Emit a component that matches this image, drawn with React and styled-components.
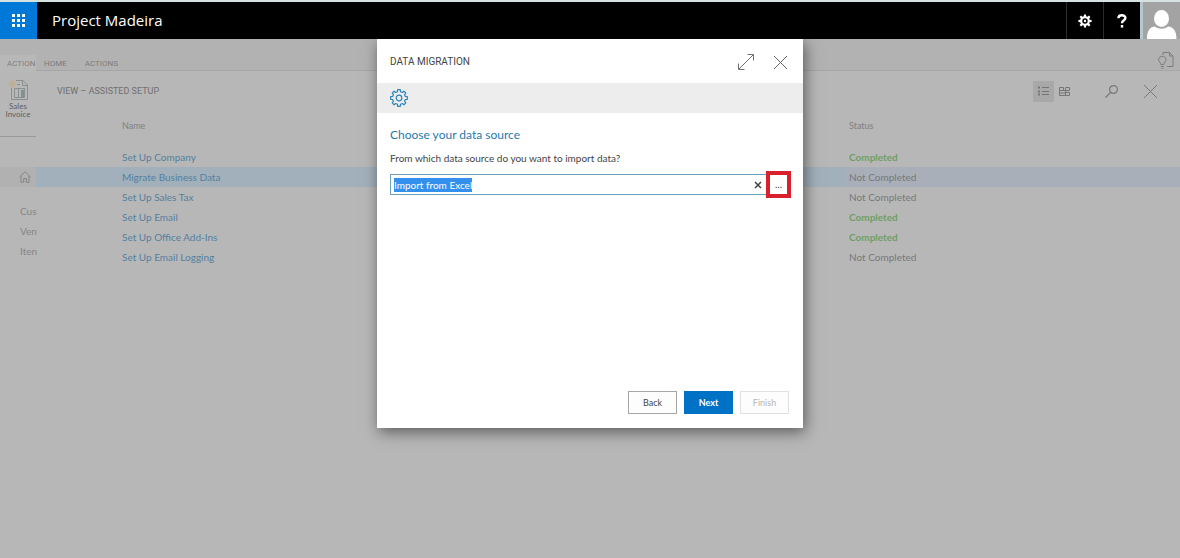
import React, { useEffect, useRef } from "react";
import styled, { createGlobalStyle } from "styled-components";

const GlobalStyle = createGlobalStyle`
  * { box-sizing: border-box; }
  body {
    margin: 0;
    background: #b7b7b7;
    font-family: Lato, "Open Sans", sans-serif;
    font-size: 10px;
    line-height: 20px;
    color: #7d7d7d;
  }
  button, input { font: inherit; color: inherit; margin: 0; }
  a { color: inherit; text-decoration: none; }
`;

const capsFont = `Roboto, "Open Sans", sans-serif`;

const Page = styled.div`
  display: flex;
  flex-direction: column;
  min-height: 100vh;
`;

const TopBar = styled.header`
  display: flex;
  height: 39px;
  border-top: 2px solid #d5e2e2;
  background: #000;
  color: #fff;
`;

const BarButton = styled.button`
  display: grid;
  place-items: center;
  width: 37px;
  padding: 0;
  border: 0;
  border-left: ${(p) => (p.$launcher ? "0" : "1px solid #2c2c2c")};
  background: ${(p) => (p.$launcher ? "#0078d7" : "#000")};
  color: #fff;
`;

const Product = styled.a`
  margin: 0 auto 0 15px;
  font-family: "Open Sans", sans-serif;
  font-size: 15px;
  line-height: 37px;
`;

const Avatar = styled.button`
  display: flex;
  align-items: flex-end;
  justify-content: center;
  width: 40px;
  padding: 0;
  border: 0;
  border-left: 3px solid #b4c8d1;
  background: #a3a3a3;
`;

const Body = styled.div`
  display: flex;
  flex: 1;
`;

const Rail = styled.aside`
  width: 36px;
  padding-top: 16px;
  background: linear-gradient(#b2b2b2 16px, transparent 16px);
  white-space: nowrap;
`;

const RailTab = styled.div`
  height: 17px;
  padding-left: 7px;
  background: #b8b8b8;
  font-family: ${capsFont};
  font-size: 8px;
  line-height: 18px;
  color: #808080;
`;

const RailAction = styled.button`
  display: flex;
  flex-direction: column;
  align-items: center;
  width: 36px;
  height: 65px;
  padding: 7px 2px 0;
  border: 0;
  border-bottom: 1px solid #999;
  background: none;
  font-size: 8px;
  line-height: 8px;
  color: #606060;
  white-space: normal;
`;

const RailHome = styled.a`
  display: flex;
  align-items: center;
  height: 20px;
  margin: 30px 0 14px;
  padding-left: 19px;
  background: #b1b1b1;
`;

const RailLink = styled.a`
  display: block;
  padding-left: 20px;
  color: #868686;
`;

const Main = styled.main`
  flex: 1;
  min-width: 0;
`;

const Ribbon = styled.nav`
  display: flex;
  align-items: flex-end;
  gap: 18px;
  height: 32px;
  padding: 0 6px 0 8px;
  border-bottom: 1px solid #a6a6a6;
  background: #b2b2b2;
  font-family: ${capsFont};
  font-size: 8px;
  line-height: 12px;
  color: #7c7c7c;
`;

const RibbonTool = styled.button`
  margin-left: auto;
  padding: 0 0 1px;
  border: 0;
  background: none;
  line-height: 0;
`;

const ViewBar = styled.div`
  display: flex;
  align-items: center;
  height: 40px;
  padding: 0 19px 0 21px;
`;

const ViewTitle = styled.h1`
  margin: 0 auto 0 0;
  font-family: ${capsFont};
  font-size: 9px;
  font-weight: 400;
  color: #6f6f6f;
`;

const ToolButton = styled.button`
  display: grid;
  place-items: center;
  width: 21px;
  height: 21px;
  margin-left: ${(p) => p.$gap || 0}px;
  padding: 0;
  border: 0;
  background: ${(p) => (p.$active ? "#a8a8a8" : "none")};
`;

const SetupTable = styled.table`
  width: 100%;
  border-collapse: collapse;
  table-layout: fixed;
`;

const HeadCell = styled.th`
  width: ${(p) => (p.$status ? "335px" : "auto")};
  height: 36px;
  padding: 5px 0 11px ${(p) => (p.$status ? 4 : 86)}px;
  font-size: 9px;
  font-weight: 400;
  text-align: left;
  color: #808080;
`;

const NameCell = styled.td`
  height: 20px;
  padding: 0 0 0 86px;
  background: ${(p) => (p.$selected ? "#a1b0bb" : "none")};
  color: #54809f;
`;

const StatusCell = styled.td`
  padding: 0 0 0 4px;
  background: ${(p) => (p.$selected ? "#a8afb8" : "none")};
  font-weight: ${(p) => (p.$done ? 700 : 400)};
  color: ${(p) => (p.$done ? "#6f9e66" : "#787878")};
`;

const Overlay = styled.div`
  position: absolute;
  top: 39px;
  left: 0;
  right: 0;
  display: flex;
  justify-content: center;
`;

const Dialog = styled.section`
  display: flex;
  flex-direction: column;
  width: 426px;
  min-height: 389px;
  background: #fff;
  box-shadow: 2px 4px 14px rgba(0, 0, 0, 0.5);
  color: #444;
`;

const DialogHeader = styled.header`
  display: flex;
  align-items: center;
  gap: 19px;
  height: 44px;
  padding: 2px 15px 0 13px;
`;

const DialogTitle = styled.h2`
  margin: 0 auto 0 0;
  font-family: ${capsFont};
  font-size: 10px;
  font-weight: 400;
  color: #444;
`;

const IconButton = styled.button`
  padding: 0;
  border: 0;
  background: none;
  line-height: 0;
`;

const StepBand = styled.div`
  display: flex;
  align-items: center;
  height: 30px;
  padding-left: 13px;
  background: #ededed;
`;

const DialogBody = styled.form`
  display: flex;
  flex: 1;
  flex-direction: column;
  padding: 11px 14px 14px 13px;
`;

const StepTitle = styled.h3`
  margin: 0;
  font-size: 12px;
  font-weight: 400;
  line-height: 22px;
  color: #1f7aad;
`;

const FieldLabel = styled.label`
  margin: 2px 0 3px;
`;

const Field = styled.div`
  display: flex;
  align-items: center;
  height: 27px;
  margin-right: -2px;
`;

const InputFrame = styled.div`
  display: flex;
  flex: 1;
  height: 21px;
  border: 1px solid #6d9fbd;
  border-right: 0;
`;

const SourceInput = styled.input`
  flex: 1;
  min-width: 0;
  padding: 1px 3px 0;
  border: 0;
  outline: 0;
  background: none;
  line-height: 14px;
  &::selection {
    background: #3390ef;
    color: #fff;
  }
`;

const ClearButton = styled.button`
  width: 16px;
  padding: 0;
  border: 0;
  background: none;
  line-height: 0;
`;

const LookupButton = styled.button`
  width: 25px;
  height: 27px;
  padding: 0;
  border: 4px solid #d9202c;
  background: #fff;
  line-height: 19px;
`;

const Footer = styled.footer`
  display: flex;
  justify-content: flex-end;
  gap: 7px;
  margin-top: auto;
`;

const FooterButton = styled.button`
  width: 49px;
  height: 23px;
  padding: 0;
  border: 1px solid ${(p) => (p.$primary ? "#0072c6" : "#a6a6a6")};
  background: ${(p) => (p.$primary ? "#0072c6" : "#fdfdfd")};
  font-size: 9px;
  font-weight: ${(p) => (p.$primary ? 700 : 400)};
  line-height: 20px;
  color: ${(p) => (p.$primary ? "#fff" : "#444")};
  &:disabled {
    border-color: #e1e1e1;
    color: #b5b5b5;
  }
`;

const tasks = [
  { name: "Set Up Company", done: true },
  { name: "Migrate Business Data", done: false, selected: true },
  { name: "Set Up Sales Tax", done: false },
  { name: "Set Up Email", done: true },
  { name: "Set Up Office Add-Ins", done: true },
  { name: "Set Up Email Logging", done: false },
];

const gearPath = (cx, cy, teeth, inner, outer) => {
  const step = (Math.PI * 2) / teeth;
  const at = (r, a) => `${(cx + r * Math.cos(a)).toFixed(2)} ${(cy + r * Math.sin(a)).toFixed(2)}`;
  let d = "";
  for (let i = 0; i < teeth; i += 1) {
    const a = i * step - Math.PI / 2;
    d += `${i ? "L" : "M"}${at(inner, a - step * 0.3)}L${at(outer, a - step * 0.2)}`;
    d += `L${at(outer, a + step * 0.2)}L${at(inner, a + step * 0.3)}`;
  }
  return `${d}Z`;
};

const CrossIcon = ({ size, color, width = 1 }) => (
  <svg width={size} height={size} viewBox={`0 0 ${size} ${size}`} fill="none" stroke={color} strokeWidth={width}>
    <path d={`M1 1L${size - 1} ${size - 1}M${size - 1} 1L1 ${size - 1}`} />
  </svg>
);

const LauncherIcon = () => (
  <svg width="13" height="13" viewBox="0 0 13 13" fill="#fff">
    {[0, 5, 10].map((y) => [0, 5, 10].map((x) => <rect key={`${x}-${y}`} x={x} y={y} width="3" height="3" />))}
  </svg>
);

const SettingsIcon = () => (
  <svg width="14" height="14" viewBox="0 0 14 14">
    <path fill="#fff" fillRule="evenodd" d={`${gearPath(7, 7, 8, 4.9, 6.7)}M7 4.3a2.7 2.7 0 1 0 0 5.4a2.7 2.7 0 1 0 0-5.4Z`} />
    <circle cx="7" cy="7" r="1.2" fill="#fff" />
  </svg>
);

const HelpIcon = () => (
  <svg width="10" height="14" viewBox="0 0 10 14" fill="none" stroke="#fff" strokeWidth="2.4">
    <path d="M1.4 4.2C1.4 0.4 8.4 0.2 8.4 4C8.4 6.4 5 6.2 5 9.2" />
    <path d="M5 11v2.6" />
  </svg>
);

const PersonIcon = () => (
  <svg width="30" height="30" viewBox="0 0 30 30" fill="#fff">
    <ellipse cx="14.5" cy="9.5" rx="7.5" ry="8.5" />
    <path d="M0 30c0-8 2.500-12 8-12.500c3.500 3 9.500 3 13 0c5.500 0.500 8.500 4.500 8.500 12.500Z" />
  </svg>
);

const InvoiceIcon = () => (
  <svg width="21" height="23" viewBox="0 0 21 23" fill="none" stroke="#8a8f90">
    <path d="M8 1.500h7l4.500 4.500v14.500h-16V9M14.500 1.500V6.500h5" />
    <path d="M6.500 9.500h10v9h-10zM10.500 9.500v9" />
    <path d="M13 11h3v7h-3z" fill="#7d9290" stroke="none" />
    <path d="M4.500 1v8M0.500 5h8M1.500 2l6 6M7.500 2l-6 6" stroke="#bfab8c" />
    <path d="M9 5.500h3" stroke="#7594a3" />
  </svg>
);

const HomeIcon = () => (
  <svg width="12" height="12" viewBox="0 0 12 12" fill="none" stroke="#858585">
    <path d="M0.500 6L6 0.800L11.500 6M2 5V11.300H4.700V7.500H7.300V11.300H10V5" />
  </svg>
);

const TipIcon = () => (
  <svg width="16" height="17" viewBox="0 0 16 17" fill="none" stroke="#7d7d7d">
    <path d="M5 3V0.500H11.500L15 4V14.500H9M11.500 0.500V4H15" />
    <path d="M2.800 12.500C2.800 10.500 0.600 9.700 0.600 7.500C0.600 3.300 8 3.300 8 7.500C8 9.700 5.800 10.500 5.800 12.500ZM2.800 14.500h3M3.300 16.300h2" />
  </svg>
);

const ListIcon = () => (
  <svg width="11" height="10" viewBox="0 0 11 10" stroke="#757575">
    <path d="M4 1.500H11M4 5.500H11M4 8.500H11" />
    <path d="M0 1.500h2M0 5.500h2M0 8.500h2" strokeWidth="2" />
  </svg>
);

const TilesIcon = () => (
  <svg width="11" height="9" viewBox="0 0 11 9" fill="none" stroke="#757575">
    <path d="M0.500 0.500h4v3h-4zM6.500 0.500h4v3h-4zM0.500 3.500h6v5h-6zM6.500 5.500h4v3h-4zM0.500 6h6" />
  </svg>
);

const SearchIcon = () => (
  <svg width="13" height="13" viewBox="0 0 13 13" fill="none" stroke="#767676" strokeWidth="1.200">
    <circle cx="8.500" cy="4.500" r="3.900" />
    <path d="M5.700 7.300L0.500 12.500" />
  </svg>
);

const ExpandIcon = () => (
  <svg width="16" height="16" viewBox="0 0 16 16" fill="none" stroke="#707070">
    <path d="M1 15L15 1M9.500 0.500H15.500V6.500M0.500 9.500V15.500H6.500" />
  </svg>
);

const StepGearIcon = () => (
  <svg width="18" height="18" viewBox="0 0 18 18" fill="none" stroke="#2b84bd" strokeWidth="1.200" strokeLinejoin="round">
    <path d={gearPath(9, 9, 8, 6.5, 8.4)} />
    <circle cx="9" cy="9" r="2.800" />
  </svg>
);

export default function App() {
  const sourceRef = useRef(null);

  useEffect(() => {
    sourceRef.current.focus();
    sourceRef.current.select();
  }, []);

  return (
    <>
      <GlobalStyle />
      <Page>
        <TopBar>
          <BarButton $launcher aria-label="App launcher"><LauncherIcon /></BarButton>
          <Product href="#">Project Madeira</Product>
          <BarButton aria-label="Settings"><SettingsIcon /></BarButton>
          <BarButton aria-label="Help"><HelpIcon /></BarButton>
          <Avatar aria-label="Account"><PersonIcon /></Avatar>
        </TopBar>
        <Body>
          <Rail>
            <RailTab>ACTION</RailTab>
            <RailAction><InvoiceIcon /><span>Sales Invoice</span></RailAction>
            <RailHome href="#" aria-label="Home"><HomeIcon /></RailHome>
            <RailLink href="#">Cus</RailLink>
            <RailLink href="#">Ven</RailLink>
            <RailLink href="#">Iten</RailLink>
          </Rail>
          <Main>
            <Ribbon>
              <a href="#">HOME</a>
              <a href="#">ACTIONS</a>
              <RibbonTool aria-label="Tips"><TipIcon /></RibbonTool>
            </Ribbon>
            <ViewBar>
              <ViewTitle>VIEW – ASSISTED SETUP</ViewTitle>
              <ToolButton $active aria-label="List view"><ListIcon /></ToolButton>
              <ToolButton aria-label="Tile view"><TilesIcon /></ToolButton>
              <ToolButton $gap={26} aria-label="Search"><SearchIcon /></ToolButton>
              <ToolButton $gap={18} aria-label="Close view"><CrossIcon size={15} color="#777" /></ToolButton>
            </ViewBar>
            <SetupTable>
              <thead>
                <tr>
                  <HeadCell>Name</HeadCell>
                  <HeadCell $status>Status</HeadCell>
                </tr>
              </thead>
              <tbody>
                {tasks.map((t) => (
                  <tr key={t.name}>
                    <NameCell $selected={t.selected}><a href="#">{t.name}</a></NameCell>
                    <StatusCell $selected={t.selected} $done={t.done}>{t.done ? "Completed" : "Not Completed"}</StatusCell>
                  </tr>
                ))}
              </tbody>
            </SetupTable>
          </Main>
        </Body>
      </Page>
      <Overlay>
        <Dialog role="dialog" aria-labelledby="dialog-title">
          <DialogHeader>
            <DialogTitle id="dialog-title">DATA MIGRATION</DialogTitle>
            <IconButton aria-label="Expand"><ExpandIcon /></IconButton>
            <IconButton aria-label="Close"><CrossIcon size={15} color="#666" /></IconButton>
          </DialogHeader>
          <StepBand><StepGearIcon /></StepBand>
          <DialogBody onSubmit={(e) => e.preventDefault()}>
            <StepTitle>Choose your data source</StepTitle>
            <FieldLabel htmlFor="source">From which data source do you want to import data?</FieldLabel>
            <Field>
              <InputFrame>
                <SourceInput id="source" ref={sourceRef} defaultValue="Import from Excel" />
                <ClearButton type="button" aria-label="Clear"><CrossIcon size={8} color="#444" width={1.5} /></ClearButton>
              </InputFrame>
              <LookupButton type="button" aria-label="Look up">...</LookupButton>
            </Field>
            <Footer>
              <FooterButton type="button">Back</FooterButton>
              <FooterButton type="submit" $primary>Next</FooterButton>
              <FooterButton type="button" disabled>Finish</FooterButton>
            </Footer>
          </DialogBody>
        </Dialog>
      </Overlay>
    </>
  );
}
